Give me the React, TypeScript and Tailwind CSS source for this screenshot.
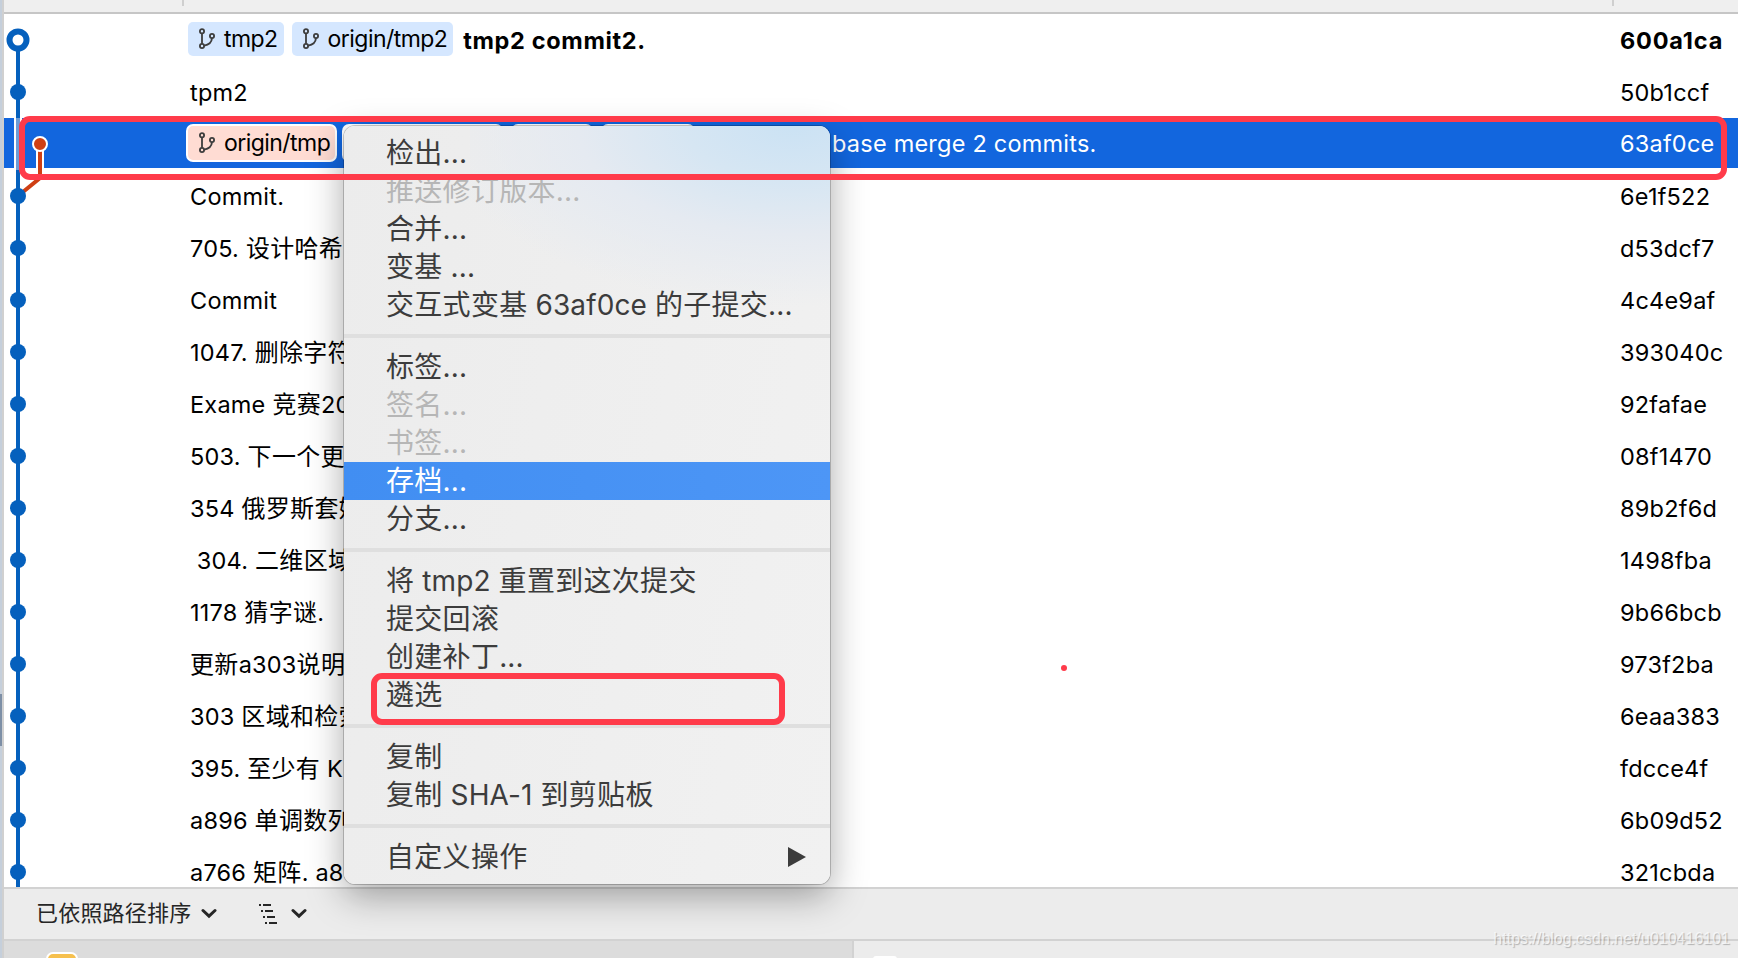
import React from "react";

const LINE = "#0560bd";

type Commit = { text: string; hash: string };

const commits: Commit[] = [
  { text: "tpm2", hash: "50b1ccf" },
  { text: "", hash: "63af0ce" },
  { text: "Commit.", hash: "6e1f522" },
  { text: "705. 设计哈希", hash: "d53dcf7" },
  { text: "Commit", hash: "4c4e9af" },
  { text: "1047. 删除字符", hash: "393040c" },
  { text: "Exame 竞赛20", hash: "92fafae" },
  { text: "503. 下一个更", hash: "08f1470" },
  { text: "354 俄罗斯套娃", hash: "89b2f6d" },
  { text: "\u00a0304. 二维区域", hash: "1498fba" },
  { text: "1178 猜字谜.", hash: "9b66bcb" },
  { text: "更新a303说明", hash: "973f2ba" },
  { text: "303 区域和检索", hash: "6eaa383" },
  { text: "395. 至少有 K", hash: "fdcce4f" },
  { text: "a896 单调数列", hash: "6b09d52" },
  { text: "a766 矩阵. a8", hash: "321cbda" },
];

type Item = { label: string; state?: "off" | "on"; arrow?: boolean };

const groups: Item[][] = [
  [
    { label: "检出..." },
    { label: "推送修订版本...", state: "off" },
    { label: "合并..." },
    { label: "变基 ..." },
    { label: "交互式变基 63af0ce 的子提交..." },
  ],
  [
    { label: "标签..." },
    { label: "签名...", state: "off" },
    { label: "书签...", state: "off" },
    { label: "存档...", state: "on" },
    { label: "分支..." },
  ],
  [
    { label: "将 tmp2 重置到这次提交" },
    { label: "提交回滚" },
    { label: "创建补丁..." },
    { label: "遴选" },
  ],
  [{ label: "复制" }, { label: "复制 SHA-1 到剪贴板" }],
  [{ label: "自定义操作", arrow: true }],
];

// Gives runs of Chinese characters their own size and tracking.
function Mixed({ text }: { text: string }) {
  return (
    <>
      {text.split(/([\u4e00-\u9fff]+)/).map((part, i) =>
        i % 2 ? (
          <span key={i} className="text-[1.02em] tracking-[0.35px]">
            {part}
          </span>
        ) : (
          part
        ),
      )}
    </>
  );
}

function BranchIcon() {
  return (
    <svg width="18" height="22" viewBox="0 0 18 22" fill="none" stroke="#3d3d3d" strokeWidth="1.8" className="shrink-0">
      <circle cx="4" cy="3.2" r="2.1" />
      <circle cx="4" cy="18" r="2.1" />
      <circle cx="14" cy="8" r="2.1" />
      <path d="M4 5.4V15.8M14 10.2C13.6 14.6 10.5 17 6.2 17.6" />
    </svg>
  );
}

function Chevron() {
  return (
    <svg width="16" height="12" viewBox="0 0 16 12" fill="none" stroke="#262626" strokeWidth="3">
      <path d="M2 2.5L8 8.2L14 2.5" strokeLinecap="round" />
    </svg>
  );
}

function Tag({ children }: { children: React.ReactNode }) {
  return (
    <div className="flex h-[34px] items-center gap-2 rounded-[5px] bg-[#d5e7ff] pl-[10px] pr-[6px]">
      <BranchIcon />
      <span className="text-[23px] leading-[34px] tracking-[-0.55px]">{children}</span>
    </div>
  );
}

function Graph() {
  const rows = Array.from({ length: 16 }, (_, i) => 78 + i * 52);
  return (
    <svg width="80" height="873" viewBox="0 0 80 873" className="absolute left-0 top-0">
      <path d="M14 26V873" stroke={LINE} strokeWidth="4" />
      <path d="M10 104H18V154H10Z" fill="#fff" />
      <path d="M12 104H16V156H12Z" fill="#6e9cd6" />
      <path d="M36 130V156" stroke="#fff" strokeWidth="8" />
      <path d="M36 130V164L14 182" stroke="#cf3f14" strokeWidth="4" fill="none" />
      <circle cx="36" cy="130" r="7" fill="#cf3f14" stroke="#fff" strokeWidth="2" />
      {rows.map((y, i) => (i === 1 ? null : <circle key={y} cx="14" cy={y} r="8" fill={LINE} />))}
      <circle cx="14" cy="26" r="8.5" fill="#fff" stroke={LINE} strokeWidth="6" />
    </svg>
  );
}

function Menu() {
  return (
    <div className="absolute left-[344px] top-[126px] h-[758px] w-[486px] rounded-[11px] bg-[linear-gradient(100deg,#ececec,#f1f1f1)] py-2 text-[28px] text-[#3c3c3c] shadow-[0_0_0_1px_rgba(0,0,0,0.2),0_12px_36px_rgba(0,0,0,0.34)]">
      <div className="absolute right-0 top-0 h-[180px] w-[360px] rounded-tr-[11px] bg-[radial-gradient(ellipse_100%_100%_at_90%_0%,#cbe2f4_0%,#d6e6f3_30%,#e5eaf1_60%,#ededee00_100%)]" />
      <div className="relative">
        {groups.map((g, i) => (
          <div key={i}>
            {i > 0 && <div className="my-[10px] h-1 bg-[#dfdfdf]" />}
            {g.map((it) => (
              <div
                key={it.label}
                className={
                  "flex h-[38px] items-center justify-between whitespace-pre pl-[42px] pr-[24px] leading-[36px] " +
                  (it.state === "on"
                    ? "bg-[linear-gradient(90deg,#418ef2,#4d96f6)] text-white"
                    : it.state === "off"
                      ? "text-[#b6b6b6]"
                      : "")
                }
              >
                <span className="-mt-px tracking-[0.1px]">
                  {it.label.split(/([\u4e00-\u9fff]+)/).map((part, k) =>
                    k % 2 ? (
                      <span key={k} className="tracking-[0.3px]">
                        {part}
                      </span>
                    ) : (
                      part
                    ),
                  )}
                </span>
                {it.arrow && (
                  <svg width="18" height="20" viewBox="0 0 18 20">
                    <path d="M0 0L18 10L0 20Z" fill="#3c3c3c" />
                  </svg>
                )}
              </div>
            ))}
          </div>
        ))}
      </div>
    </div>
  );
}

export default function App() {
  return (
    <div className="relative flex h-[958px] w-[1738px] overflow-hidden bg-[#c5cfdb] font-[Inter,'Noto_Sans_CJK_SC',sans-serif] text-[23.5px] text-black">
      <div className="flex w-1 shrink-0 flex-col border-r-2 border-[#d0d0d0]">
        <div className="mt-[694px] h-[52px] bg-[#7d8fa6]" />
      </div>
      <div className="flex min-w-0 flex-1 flex-col bg-white">
        <div className="flex h-[14px] shrink-0 border-b-2 border-[#c6c6c6] bg-[#efefef]">
          <div className="ml-[178px] h-[6px] w-[2px] bg-[#cfcfcf]" />
          <div className="ml-[1428px] h-[6px] w-[2px] bg-[#cfcfcf]" />
        </div>
        <div className="relative h-[873px] shrink-0 overflow-hidden tracking-[0.22px]">
          <div className="flex h-[52px] items-center pl-[184px] font-bold">
            <div className="mb-[2px] flex gap-2 font-normal">
              <Tag>tmp2</Tag>
              <Tag>origin/tmp2</Tag>
            </div>
            <span className="ml-[10px] flex-1 pt-[2px] tracking-[0.65px]">tmp2 commit2.</span>
            <span className="w-[118px] pt-[2px] tracking-[0.8px]">600a1ca</span>
          </div>
          {commits.map((c, i) =>
            i === 1 ? (
              <div key={c.hash} className="mb-[2px] flex h-[50px] items-center bg-[#1266de] pl-[182px] text-white">
                <div className="flex h-[38px] w-[151px] shrink-0 items-center gap-2 rounded-[7px] border-2 border-white bg-[#ffdcd3] pl-[10px] text-black">
                  <BranchIcon />
                  <span className="text-[23px] tracking-[-0.55px]">origin/tmp</span>
                </div>
                <div className="ml-[5px] h-[38px] w-[161px] rounded-[7px] bg-white" />
                <div className="ml-2 h-[38px] w-[82px] rounded-[7px] bg-white" />
                <div className="ml-2 h-[38px] w-[94px] rounded-[7px] bg-white" />
                <span className="flex-1 pl-[137px] pt-[2px]">base merge 2 commits.</span>
                <span className="w-[118px] pt-[2px]">63af0ce</span>
              </div>
            ) : (
              <div key={c.hash} className="flex h-[52px] items-center whitespace-pre pl-[186px] pt-[2px]">
                <span className="flex-1">
                  <Mixed text={c.text} />
                </span>
                <span className="w-[118px]">{c.hash}</span>
              </div>
            ),
          )}
          <Graph />
        </div>
        <div className="flex h-[54px] shrink-0 items-center border-y-2 border-[#d2d2d2] bg-[#ececec] pl-[32px] text-[22px] text-[#262626]">
          <span className="-mt-[2px] mr-[10px] tracking-[0.2px]">已依照路径排序</span>
          <Chevron />
          <svg width="20" height="22" viewBox="0 0 20 22" stroke="#262626" strokeWidth="2" className="ml-[41px] mr-[13px]">
            <path d="M1 2H3M5 2H13M3 8H5M7 8H15M5 14H7M9 14H17M7 20H9M11 20H19" />
          </svg>
          <Chevron />
        </div>
        <div className="flex flex-1 overflow-hidden bg-[#dcdcdc]">
          <div className="ml-[42px] mt-[11px] h-[30px] w-[32px] shrink-0 rounded-[7px] border-2 border-white bg-[#f6c04e]" />
          <div className="ml-[774px] flex-1 border-l-2 border-[#d2d2d2] bg-[#ececec]">
            <div className="ml-[19px] mt-[15px] h-[20px] w-[24px] rounded-[3px] bg-white" />
          </div>
        </div>
      </div>
      <Menu />
      <div className="absolute left-[19px] top-[116px] h-[64px] w-[1708px] rounded-[11px] border-[6px] border-[#ff3b4a]" />
      <div className="absolute left-[371px] top-[673px] h-[52px] w-[414px] rounded-[11px] border-[6px] border-[#ff3b4a]" />
      <div className="absolute left-[1061px] top-[665px] h-[6px] w-[6px] rounded-full bg-[#ff3b4a]" />
      <div className="absolute bottom-[7px] right-[8px] font-['Liberation_Sans',sans-serif] text-[16px] text-white/70 [text-shadow:1px_1px_1px_rgba(0,0,0,0.25)]">
        https://blog.csdn.net/u010416101
      </div>
    </div>
  );
}
